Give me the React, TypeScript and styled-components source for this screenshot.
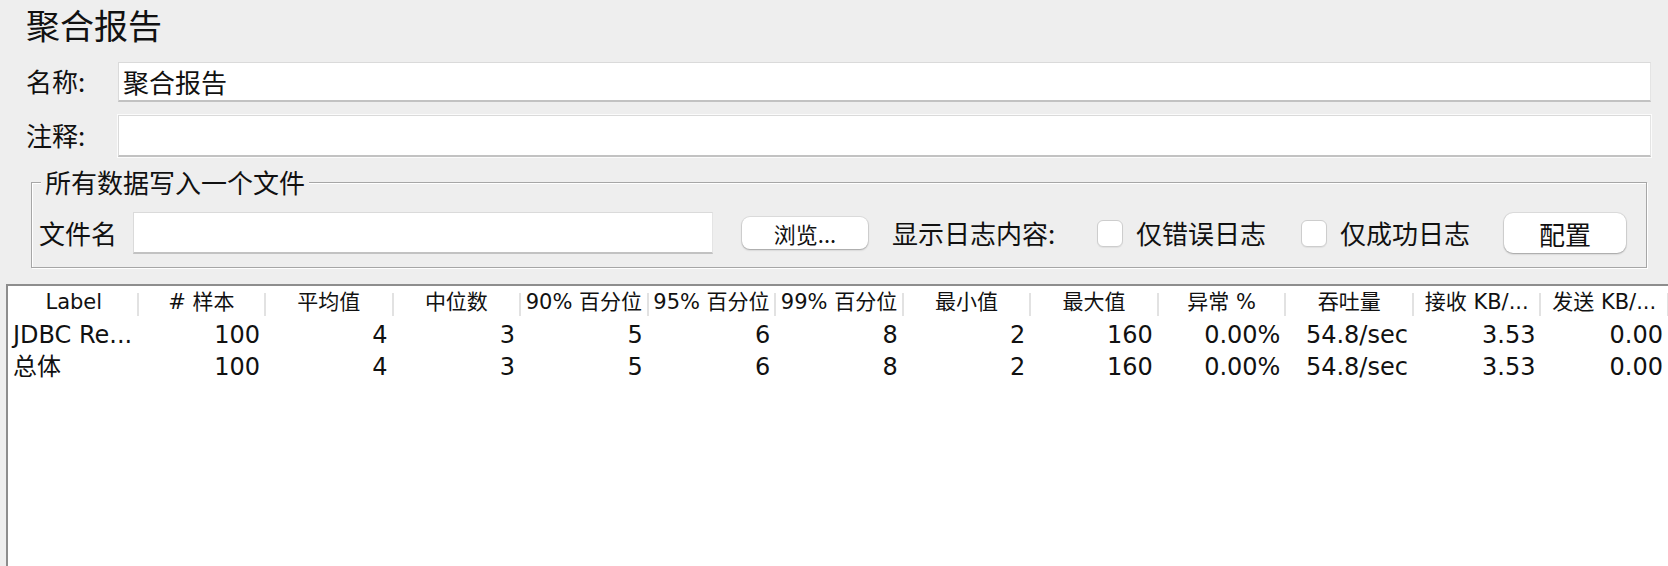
import React from "react";
import styled, { createGlobalStyle } from "styled-components";

const CJK_FONT = `"Noto Sans CJK SC", "DejaVu Sans", sans-serif`;
const TABLE_FONT = `"DejaVu Sans", "Noto Sans CJK SC", sans-serif`;

const GlobalStyle = createGlobalStyle`
  *, *::before, *::after { box-sizing: border-box; }
  html, body { margin: 0; padding: 0; background: #eeeeee; }
  body { font-family: ${CJK_FONT}; color: #111; }
`;

const Window = styled.div`
  width: 1668px;
  height: 566px;
  display: flex;
  flex-direction: column;
  background: #eeeeee;
  overflow: hidden;
`;

const TopArea = styled.div`
  display: flex;
  flex-direction: column;
  padding: 7px 17px 0 26px;
`;

const Title = styled.h1`
  margin: 0;
  font-family: ${CJK_FONT};
  font-size: 34px;
  line-height: 36px;
  font-weight: 400;
`;

const FieldRow = styled.div<{ $top: number; $height: number }>`
  display: grid;
  grid-template-columns: 92px 1fr;
  align-items: center;
  margin-top: ${(p) => p.$top}px;
  height: ${(p) => p.$height}px;
`;

const FieldLabel = styled.label`
  font-size: 26px;
  line-height: 30px;
  margin-top: -2px;
`;

const TextField = styled.input<{ $etched?: boolean }>`
  height: 100%;
  width: 100%;
  margin: 0;
  padding: 0 4px;
  background: #fff;
  border: 1px solid #dadada;
  border-bottom: 2px solid #c2c2c2;
  border-right-color: #e4e4e4;
  border-radius: 0;
  outline: none;
  font-family: ${CJK_FONT};
  font-size: 26px;
  color: #111;
  ${(p) => (p.$etched ? "box-shadow: 0 0 0 1px #fbfbfb;" : "")}
`;

const Group = styled.section`
  display: flex;
  flex-direction: column;
  align-items: flex-start;
  margin: 25px 4px 0 5px;
  padding: 0 0 13px 7px;
  border: 1px solid #a6a6a6;
  box-shadow: inset 1px 1px 0 #ffffff, 1px 1px 0 #ffffff;
`;

const Legend = styled.h2`
  margin: -15px 0 0 2px;
  padding: 0 4px;
  background: #eeeeee;
  font-size: 26px;
  line-height: 28px;
  font-weight: 400;
`;

const FileRow = styled.div`
  display: flex;
  align-items: center;
  height: 42px;
  margin-top: 16px;
`;

const InlineLabel = styled.span<{ $width: number; $ml?: number }>`
  width: ${(p) => p.$width}px;
  margin-left: ${(p) => p.$ml ?? 0}px;
  flex: none;
  font-size: 26px;
  line-height: 30px;
  white-space: nowrap;
`;

const FileInput = styled(TextField)`
  width: 580px;
  height: 42px;
  flex: none;
`;

const PushButton = styled.button<{ $w: number; $h: number; $fs: number; $ml: number; $r: number }>`
  flex: none;
  width: ${(p) => p.$w}px;
  height: ${(p) => p.$h}px;
  margin-left: ${(p) => p.$ml}px;
  padding: 0;
  border: none;
  border-radius: ${(p) => p.$r}px;
  background: #ffffff;
  box-shadow: 0 0 0 1px rgba(0, 0, 0, 0.07), 0 1px 2px rgba(0, 0, 0, 0.28);
  font-family: ${CJK_FONT};
  font-size: ${(p) => p.$fs}px;
  color: #111;
  cursor: default;
`;

const CheckOption = styled.label<{ $ml: number }>`
  display: flex;
  align-items: center;
  gap: 13px;
  margin-left: ${(p) => p.$ml}px;
  font-size: 26px;
  line-height: 30px;
  white-space: nowrap;
`;

const CheckBox = styled.span`
  width: 26px;
  height: 27px;
  flex: none;
  background: #ffffff;
  border: 1px solid #cdcdcd;
  border-radius: 6px;
  box-shadow: 0 1px 1px rgba(0, 0, 0, 0.06);
`;

const TablePanel = styled.div`
  flex: 1;
  margin: 16px 0 0 6px;
  padding-left: 2px;
  background: #ffffff;
  border-top: 2px solid #8d8d8d;
  border-left: 2px solid #8d8d8d;
  font-family: ${TABLE_FONT};
  color: #111;
`;

const GridRow = styled.div<{ $h: number }>`
  display: grid;
  grid-template-columns: repeat(13, minmax(0, 1fr));
  height: ${(p) => p.$h}px;
`;

const HeadCell = styled.div`
  position: relative;
  font-size: 21px;
  line-height: 33px;
  text-align: center;
  white-space: nowrap;
  &::after {
    content: "";
    position: absolute;
    right: -1px;
    top: 7px;
    width: 2px;
    height: 23px;
    background: #e2e2e2;
  }
`;

const Cell = styled.div<{ $align: "left" | "right" }>`
  font-size: 24px;
  line-height: 32px;
  white-space: nowrap;
  overflow: hidden;
  text-align: ${(p) => p.$align};
  padding: ${(p) => (p.$align === "left" ? "0 0 0 3px" : "0 5px 0 0")};
`;

const headers = [
  "Label",
  "# 样本",
  "平均值",
  "中位数",
  "90% 百分位",
  "95% 百分位",
  "99% 百分位",
  "最小值",
  "最大值",
  "异常 %",
  "吞吐量",
  "接收 KB/...",
  "发送 KB/...",
];

const stats = ["100", "4", "3", "5", "6", "8", "2", "160", "0.00%", "54.8/sec", "3.53", "0.00"];

const rows = [
  ["JDBC Re...", ...stats],
  ["总体", ...stats],
];

export default function App() {
  return (
    <>
      <GlobalStyle />
      <Window>
        <TopArea>
          <Title>聚合报告</Title>
          <FieldRow $top={19} $height={37}>
            <FieldLabel>名称:</FieldLabel>
            <TextField readOnly defaultValue="聚合报告" />
          </FieldRow>
          <FieldRow $top={16} $height={42}>
            <FieldLabel>注释:</FieldLabel>
            <TextField readOnly defaultValue="" $etched />
          </FieldRow>
          <Group>
            <Legend>所有数据写入一个文件</Legend>
            <FileRow>
              <InlineLabel $width={94}>文件名</InlineLabel>
              <FileInput readOnly defaultValue="" />
              <PushButton $w={126} $h={32} $fs={22} $ml={29} $r={8}>
                浏览...
              </PushButton>
              <InlineLabel $width={205} $ml={24}>
                显示日志内容:
              </InlineLabel>
              <CheckOption $ml={0}>
                <CheckBox />
                仅错误日志
              </CheckOption>
              <CheckOption $ml={35}>
                <CheckBox />
                仅成功日志
              </CheckOption>
              <PushButton $w={122} $h={40} $fs={26} $ml={34} $r={9}>
                配置
              </PushButton>
            </FileRow>
          </Group>
        </TopArea>
        <TablePanel>
          <GridRow $h={33}>
            {headers.map((h) => (
              <HeadCell key={h}>{h}</HeadCell>
            ))}
          </GridRow>
          {rows.map((r, ri) => (
            <GridRow $h={32} key={ri}>
              {r.map((v, ci) => (
                <Cell key={ci} $align={ci === 0 ? "left" : "right"}>
                  {v}
                </Cell>
              ))}
            </GridRow>
          ))}
        </TablePanel>
      </Window>
    </>
  );
}
